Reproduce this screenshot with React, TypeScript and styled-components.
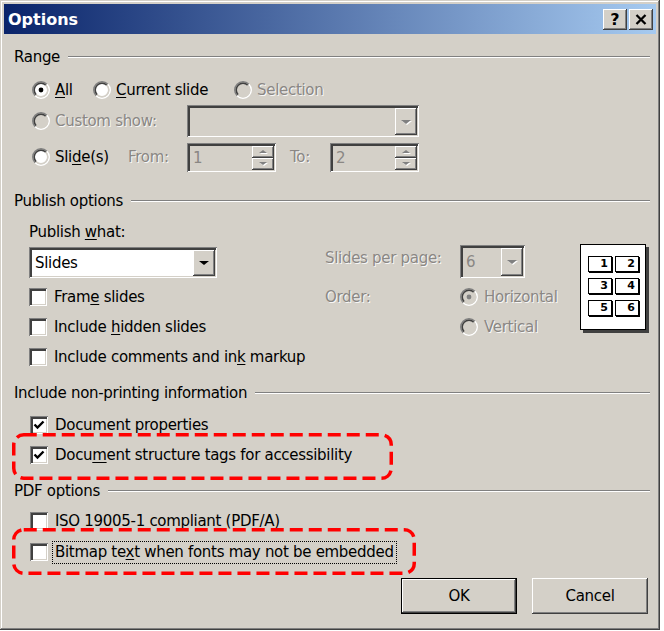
import styled, { createGlobalStyle } from "styled-components";

const FACE = "#d4d0c8";
const SHADOW = "#808080";
const DARK = "#404040";
const MUTED = "#8a8784";

const GlobalStyle = createGlobalStyle`
  body {
    margin: 0;
    background: #fff;
  }
  * {
    box-sizing: border-box;
  }
`;

const raised = `
  box-shadow: inset -1px -1px ${DARK}, inset 1px 1px #fff,
    inset -2px -2px ${SHADOW}, inset 2px 2px ${FACE};
`;

const sunken = `
  box-shadow: inset 1px 1px ${SHADOW}, inset -1px -1px #fff,
    inset 3px 3px ${DARK}, inset -2px -2px ${FACE};
`;

const Window = styled.div`
  position: relative;
  width: 660px;
  height: 630px;
  padding: 4px;
  display: flex;
  flex-direction: column;
  background: ${FACE};
  box-shadow: inset -1px -1px ${DARK}, inset 1px 1px ${FACE},
    inset -2px -2px ${SHADOW}, inset 2px 2px #fff;
  font-family: "DejaVu Sans", Tahoma, sans-serif;
  font-size: 15px;
  letter-spacing: -0.3px;
  color: #000;
`;

const TitleBar = styled.div`
  height: 30px;
  flex-shrink: 0;
  display: flex;
  align-items: center;
  padding: 0 3px 0 4px;
  background: linear-gradient(to right, #0a246a, #a6caf0);
`;

const TitleText = styled.div`
  flex: 1;
  color: #fff;
  font-size: 16px;
  font-weight: bold;
  letter-spacing: 0;
`;

const TitleButton = styled.div`
  width: 24px;
  height: 21px;
  margin-left: 2px;
  display: flex;
  align-items: center;
  justify-content: center;
  background: ${FACE};
  ${raised}
  font-size: 16px;
  font-weight: bold;
  letter-spacing: 0;
`;

const Body = styled.div`
  flex: 1;
  display: flex;
  flex-direction: column;
  padding: 8px 8px 0 10px;
`;

const GroupHeader = styled.div<{ $mt?: number }>`
  height: 30px;
  margin-top: ${(p) => p.$mt ?? 0}px;
  display: flex;
  align-items: center;
  gap: 8px;
`;

const GroupRule = styled.div`
  flex: 1;
  height: 2px;
  margin-right: -2px;
  border-top: 1px solid ${SHADOW};
  border-bottom: 1px solid #fff;
`;

const Row = styled.div<{ $h?: number; $mt?: number; $indent?: number }>`
  height: ${(p) => p.$h ?? 30}px;
  margin-top: ${(p) => p.$mt ?? 0}px;
  padding-left: ${(p) => p.$indent ?? 0}px;
  display: flex;
  align-items: center;
`;

const Option = styled.div<{ $w?: number; $disabled?: boolean; $gap?: number }>`
  ${(p) => (p.$w ? `width: ${p.$w}px;` : "")}
  flex-shrink: 0;
  display: flex;
  align-items: center;
  gap: ${(p) => p.$gap ?? 5}px;
  color: ${(p) => (p.$disabled ? MUTED : "#000")};
  text-shadow: ${(p) => (p.$disabled ? "1px 1px 0 rgba(255,255,255,0.85)" : "none")};
  white-space: nowrap;
`;

const Muted = styled.span<{ $w?: number; $ml?: number }>`
  ${(p) => (p.$w ? `width: ${p.$w}px;` : "")}
  margin-left: ${(p) => p.$ml ?? 0}px;
  flex-shrink: 0;
  color: ${MUTED};
  text-shadow: 1px 1px 0 rgba(255, 255, 255, 0.85);
  white-space: nowrap;
`;

const Key = styled.span`
  text-decoration: underline;
  text-underline-offset: 2px;
`;

const Field = styled.div<{ $w: number; $h: number; $disabled?: boolean; $mt?: number }>`
  width: ${(p) => p.$w}px;
  height: ${(p) => p.$h}px;
  margin-top: ${(p) => p.$mt ?? 0}px;
  flex-shrink: 0;
  display: flex;
  align-items: stretch;
  padding: 3px 2px 2px 3px;
  background: ${(p) => (p.$disabled ? FACE : "#fff")};
  ${sunken}
`;

const FieldText = styled.div<{ $disabled?: boolean }>`
  flex: 1;
  display: flex;
  align-items: center;
  padding-left: 3px;
  color: ${(p) => (p.$disabled ? MUTED : "#000")};
`;

const DropButton = styled.div`
  width: 22px;
  display: flex;
  align-items: center;
  justify-content: center;
  background: ${FACE};
  ${raised}
`;

const SpinColumn = styled.div`
  width: 22px;
  display: flex;
  flex-direction: column;
`;

const SpinButton = styled(DropButton)`
  width: 100%;
  flex: 1;
`;

const Arrow = styled.span<{ $up?: boolean; $disabled?: boolean; $size?: number }>`
  width: 0;
  height: 0;
  border-left: ${(p) => p.$size ?? 5}px solid transparent;
  border-right: ${(p) => p.$size ?? 5}px solid transparent;
  ${(p) => (p.$up ? "border-bottom" : "border-top")}: ${(p) => (p.$size ?? 5) - 1}px solid
    ${(p) => (p.$disabled ? SHADOW : "#000")};
  filter: ${(p) => (p.$disabled ? "drop-shadow(1px 1px 0 #fff)" : "none")};
`;

const BoxMark = styled.span<{ $disabled?: boolean }>`
  width: 18px;
  height: 18px;
  flex-shrink: 0;
  display: flex;
  align-items: center;
  justify-content: center;
  background: ${(p) => (p.$disabled ? FACE : "#fff")};
  ${sunken}
`;

const RadioMark = styled.svg`
  flex-shrink: 0;
  display: block;
`;

const PublishGrid = styled.div`
  display: grid;
  grid-template-columns: 296px 135px 119px 71px;
  grid-template-rows: 31px 35px 30px 30px 30px;
  padding-left: 15px;
`;

const Cell = styled.div<{ $col: number; $row: number; $rowSpan?: number; $align?: string }>`
  grid-column: ${(p) => p.$col};
  grid-row: ${(p) => p.$row} / span ${(p) => p.$rowSpan ?? 1};
  display: flex;
  align-items: ${(p) => p.$align ?? "center"};
`;

const TopLabel = styled(Muted)`
  line-height: 22px;
`;

const PreviewPage = styled.div`
  width: 66px;
  height: 86px;
  margin-top: -3px;
  margin-left: 1px;
  display: grid;
  grid-template-columns: 24px 24px;
  column-gap: 3px;
  row-gap: 6px;
  align-content: start;
  padding: 11px 0 0 7px;
  background: #fff;
  border: 1px solid #000;
  box-shadow: 3px 3px 0 ${DARK};
`;

const PreviewSlot = styled.div`
  height: 16px;
  padding-right: 3px;
  border: 1px solid #000;
  box-shadow: 1px 1px 0 #000;
  font-size: 11px;
  font-weight: bold;
  line-height: 14px;
  text-align: right;
  letter-spacing: 0;
`;

const Focus = styled.span`
  margin-left: -3px;
  padding: 2px 3px;
  line-height: 19px;
  outline: 1px dotted #000;
  outline-offset: -1px;
`;

const ButtonRow = styled.div`
  margin-top: 11px;
  display: flex;
  justify-content: flex-end;
  gap: 15px;
`;

const Button = styled.div<{ $default?: boolean }>`
  width: 116px;
  height: 36px;
  display: flex;
  align-items: center;
  justify-content: center;
  background: ${FACE};
  box-shadow: ${(p) =>
    p.$default
      ? `inset 0 0 0 1px #000, inset -2px -2px ${DARK}, inset 2px 2px #fff, inset -3px -3px ${SHADOW}`
      : `inset -1px -1px ${DARK}, inset 1px 1px #fff, inset -2px -2px ${SHADOW}, inset 2px 2px ${FACE}`};
`;

const Annotation = styled.svg<{ $left: number; $top: number }>`
  position: absolute;
  left: ${(p) => p.$left}px;
  top: ${(p) => p.$top}px;
  overflow: visible;
  pointer-events: none;
`;

function arc(r: number, upper: boolean) {
  const d = r * Math.SQRT1_2;
  const tr = `${6 + d} ${6 - d}`;
  const bl = `${6 - d} ${6 + d}`;
  return upper ? `M${bl} A${r} ${r} 0 0 1 ${tr}` : `M${tr} A${r} ${r} 0 0 1 ${bl}`;
}

const Radio = ({ checked, disabled }: { checked?: boolean; disabled?: boolean }) => (
  <RadioMark width="18" height="18" viewBox="0 0 12 12">
    <circle cx="6" cy="6" r="4.2" fill={disabled ? FACE : "#fff"} />
    <path d={arc(5.5, true)} stroke={SHADOW} strokeWidth="1" fill="none" />
    <path d={arc(5.5, false)} stroke="#fff" strokeWidth="1" fill="none" />
    <path d={arc(4.5, true)} stroke={DARK} strokeWidth="1" fill="none" />
    <path d={arc(4.5, false)} stroke={FACE} strokeWidth="1" fill="none" />
    {checked && <circle cx="6" cy="6" r="1.6" fill={disabled ? SHADOW : "#000"} />}
  </RadioMark>
);

const CheckBox = ({ checked }: { checked?: boolean }) => (
  <BoxMark>
    {checked && (
      <svg width="12" height="12" viewBox="0 0 12 12">
        <path d="M1.5 5.5 L4.5 8.5 L10.5 2.5" stroke="#000" strokeWidth="2.4" fill="none" />
      </svg>
    )}
  </BoxMark>
);

const DashedBox = ({ left, top, w, h }: { left: number; top: number; w: number; h: number }) => (
  <Annotation $left={left} $top={top} width={w} height={h}>
    <rect
      x="1.75"
      y="1.75"
      width={w - 3.5}
      height={h - 3.5}
      rx="10"
      fill="none"
      stroke="#f00"
      strokeWidth="3.5"
      strokeDasharray="13 6"
    />
  </Annotation>
);

const App = () => {
  return (
    <>
      <GlobalStyle />
      <Window>
        <TitleBar>
          <TitleText>Options</TitleText>
          <TitleButton>?</TitleButton>
          <TitleButton>
            <svg width="12" height="11" viewBox="0 0 12 11">
              <path d="M1.5 1 L10.5 10 M10.5 1 L1.5 10" stroke="#000" strokeWidth="2.3" />
            </svg>
          </TitleButton>
        </TitleBar>

        <Body>
          <GroupHeader>
            Range
            <GroupRule />
          </GroupHeader>
          <Row $mt={3} $indent={18}>
            <Option $w={61}>
              <Radio checked />
              <span>
                <Key>A</Key>ll
              </span>
            </Option>
            <Option $w={141}>
              <Radio />
              <span>
                <Key>C</Key>urrent slide
              </span>
            </Option>
            <Option $disabled>
              <Radio disabled />
              Selection
            </Option>
          </Row>
          <Row $h={32} $indent={18}>
            <Option $w={155} $disabled>
              <Radio disabled />
              Custom show:
            </Option>
            <Field $w={232} $h={32} $disabled>
              <FieldText />
              <DropButton>
                <Arrow $disabled />
              </DropButton>
            </Field>
          </Row>
          <Row $mt={5} $indent={18}>
            <Option $w={96}>
              <Radio />
              <span>
                Sli<Key>d</Key>e(s)
              </span>
            </Option>
            <Muted $w={59}>From:</Muted>
            <Field $w={89} $h={29} $disabled>
              <FieldText $disabled>1</FieldText>
              <SpinColumn>
                <SpinButton>
                  <Arrow $up $disabled $size={4} />
                </SpinButton>
                <SpinButton>
                  <Arrow $disabled $size={4} />
                </SpinButton>
              </SpinColumn>
            </Field>
            <Muted $w={40} $ml={14}>
              To:
            </Muted>
            <Field $w={89} $h={29} $disabled>
              <FieldText $disabled>2</FieldText>
              <SpinColumn>
                <SpinButton>
                  <Arrow $up $disabled $size={4} />
                </SpinButton>
                <SpinButton>
                  <Arrow $disabled $size={4} />
                </SpinButton>
              </SpinColumn>
            </Field>
          </Row>

          <GroupHeader $mt={14}>
            Publish options
            <GroupRule />
          </GroupHeader>
          <PublishGrid>
            <Cell $col={1} $row={1}>
              <span>
                Publish <Key>w</Key>hat:
              </span>
            </Cell>
            <Cell $col={1} $row={2} $align="flex-start">
              <Field $w={188} $h={31}>
                <FieldText>Slides</FieldText>
                <DropButton>
                  <Arrow />
                </DropButton>
              </Field>
            </Cell>
            <Cell $col={1} $row={3}>
              <Option $gap={7}>
                <CheckBox />
                <span>
                  Fram<Key>e</Key> slides
                </span>
              </Option>
            </Cell>
            <Cell $col={1} $row={4}>
              <Option $gap={7}>
                <CheckBox />
                <span>
                  Include <Key>h</Key>idden slides
                </span>
              </Option>
            </Cell>
            <Cell $col={1} $row={5}>
              <Option $gap={7}>
                <CheckBox />
                <span>
                  Include comments and in<Key>k</Key> markup
                </span>
              </Option>
            </Cell>

            <Cell $col={2} $row={2} $align="flex-start">
              <TopLabel>Slides per page:</TopLabel>
            </Cell>
            <Cell $col={3} $row={2} $align="flex-start">
              <Field $w={65} $h={33} $mt={-2} $disabled>
                <FieldText $disabled>6</FieldText>
                <DropButton>
                  <Arrow $disabled />
                </DropButton>
              </Field>
            </Cell>
            <Cell $col={2} $row={3}>
              <Muted>Order:</Muted>
            </Cell>
            <Cell $col={3} $row={3}>
              <Option $disabled $gap={6}>
                <Radio checked disabled />
                Horizontal
              </Option>
            </Cell>
            <Cell $col={3} $row={4}>
              <Option $disabled $gap={6}>
                <Radio disabled />
                Vertical
              </Option>
            </Cell>
            <Cell $col={4} $row={2} $rowSpan={4} $align="flex-start">
              <PreviewPage>
                {[1, 2, 3, 4, 5, 6].map((n) => (
                  <PreviewSlot key={n}>{n}</PreviewSlot>
                ))}
              </PreviewPage>
            </Cell>
          </PublishGrid>

          <GroupHeader $mt={6}>
            Include non-printing information
            <GroupRule />
          </GroupHeader>
          <Row $mt={2} $indent={16}>
            <Option $gap={7}>
              <CheckBox checked />
              Document properties
            </Option>
          </Row>
          <Row $indent={16}>
            <Option $gap={7}>
              <CheckBox checked />
              <span>
                Docu<Key>m</Key>ent structure tags for accessibility
              </span>
            </Option>
          </Row>

          <GroupHeader $mt={6}>
            PDF options
            <GroupRule />
          </GroupHeader>
          <Row $indent={16}>
            <Option $gap={7}>
              <CheckBox />
              <span>
                ISO <Key>1</Key>9005-1 compliant (PDF/A)
              </span>
            </Option>
          </Row>
          <Row $mt={1} $indent={16}>
            <Option $gap={7}>
              <CheckBox />
              <Focus>
                Bitmap te<Key>x</Key>t when fonts may not be embedded
              </Focus>
            </Option>
          </Row>

          <ButtonRow>
            <Button $default>OK</Button>
            <Button>Cancel</Button>
          </ButtonRow>
        </Body>

        <DashedBox left={12} top={433} w={381} h={47} />
        <DashedBox left={12} top={528} w={404} h={47} />
      </Window>
    </>
  );
};

export default App;
